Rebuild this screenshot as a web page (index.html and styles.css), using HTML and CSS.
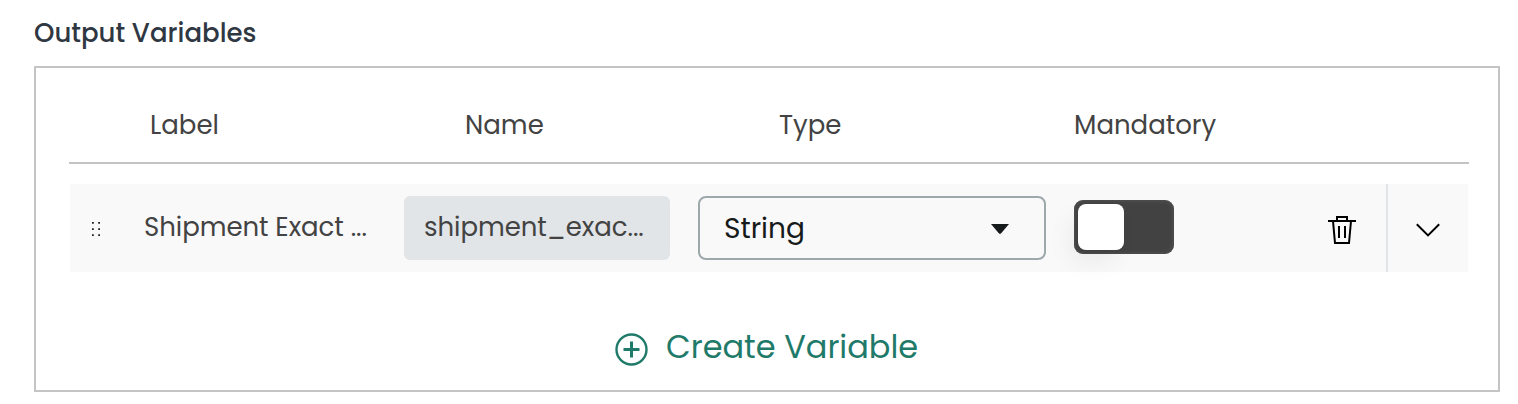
FILE: index.html
```html
<!DOCTYPE html>
<html lang="en">
<head>
<meta charset="utf-8">
<title>Output Variables</title>
<link rel="stylesheet" href="styles.css">
</head>
<body>
<main class="section">
  <h2 class="section-title">Output Variables</h2>
  <div class="panel">
    <div class="table-head">
      <span class="th th-label">Label</span>
      <span class="th th-name">Name</span>
      <span class="th th-type">Type</span>
      <span class="th th-mandatory">Mandatory</span>
    </div>
    <div class="row">
      <svg class="grip" width="10" height="16" viewBox="0 0 10 16" fill="#222"><path d="M0 1h1.800v1.800H0zM6.200 1H8v1.800H6.200zM0 7.200h1.800V9H0zM6.200 7.200H8V9H6.200zM0 13.200h1.800V15H0zM6.200 13.200H8V15H6.200z"/></svg>
      <span class="label-text">Shipment Exact ...</span>
      <div class="name-field"><span class="name-text">shipment_exac...</span></div>
      <div class="select">
        <span class="select-text">String</span>
        <svg class="caret" width="18" height="10" viewBox="0 0 18 10"><path d="M0 0h18L10.2 9.2q-1.2 1-2.4 0z" fill="#161a1a"/></svg>
      </div>
      <div class="toggle"><span class="knob"></span></div>
      <svg class="trash" width="28" height="28" viewBox="0 0 28 28" fill="none" stroke="#000" stroke-width="2"><path d="M0 5h28M9 5V1h10v4M5 5l2 22h14l2-22M11 10v12M17 10v12"/></svg>
      <div class="expand">
        <svg width="24" height="14" viewBox="0 0 24 14" fill="none" stroke="#000" stroke-width="2"><path d="M.8 1.2L12 12.4 23.200 1.200"/></svg>
      </div>
    </div>
    <div class="create">
      <svg class="plus" width="33" height="33" viewBox="0 0 33 33" fill="none" stroke="#1f7a6a"><circle cx="16.500" cy="16.500" r="15" stroke-width="2.400"/><path d="M16.500 8.500v16M8.500 16.500h16" stroke-width="3"/></svg>
      <span class="create-text">Create Variable</span>
    </div>
  </div>
</main>
</body>
</html>
```
FILE: styles.css
```css
* { box-sizing: border-box; }
body {
  margin: 0;
  background: #fff;
  color: #434343;
  font-family: Poppins, Inter, sans-serif;
  font-size: 26px;
  white-space: nowrap;
}
.section { padding: 17px 18px 0 34px; }
.section-title {
  margin: 0;
  height: 49px;
  font-size: 26px;
  line-height: 32px;
  font-weight: 500;
  color: #2f3742;
}
.panel {
  height: 326px;
  border: 2px solid #c4c4c4;
  padding: 32px 29px 0 33px;
}
.table-head {
  display: grid;
  grid-template-columns: 315px 314px 295px 1fr;
  height: 64px;
  padding-left: 81px;
  border-bottom: 2px solid #c4c4c4;
  line-height: 51px;
}
.row {
  display: flex;
  align-items: center;
  height: 88px;
  margin: 20px 1px 0 1px;
  background: #f9f9f9;
}
.grip { margin: 1px 0 0 22px; }
.label-text { width: 260px; margin: -1px 0 0 42px; letter-spacing: -0.05px; }
.name-field {
  width: 266px;
  height: 64px;
  padding-left: 20px;
  border-radius: 6px;
  background: #e1e5e8;
  line-height: 63px;
  letter-spacing: -0.05px;
}
.select {
  display: flex;
  align-items: center;
  justify-content: space-between;
  width: 348px;
  height: 64px;
  margin-left: 28px;
  padding: 0 35px 0 24px;
  border: 2px solid #9ca8aa;
  border-radius: 8px;
  color: #161a1a;
  font-size: 28px;
}
.select-text { padding-top: 1px; }
.caret { margin-top: 2px; }
.toggle {
  width: 100px;
  height: 54px;
  margin: -2px 0 0 28px;
  padding: 4px;
  border-radius: 9px;
  background: #424242;
  box-shadow: inset 0 0 5px #5a5a5a;
}
.knob {
  display: block;
  width: 46px;
  height: 46px;
  border-radius: 8px;
  background: #fff;
  box-shadow: -8px 12px 24px rgba(0, 0, 0, 0.06);
}
.trash { margin: 4px 0 0 154px; }
.expand {
  display: flex;
  align-items: center;
  justify-content: center;
  width: 82px;
  height: 88px;
  margin-left: auto;
  padding-top: 4px;
  border-left: 2px solid #e1e5e8;
}
.create {
  display: flex;
  align-items: center;
  height: 40px;
  margin: 57px 0 0 546px;
  color: #1f7a6a;
  font-size: 32px;
}
.plus { margin-top: 1px; }
.create-text { margin: -4px 0 0 18px; }
```
